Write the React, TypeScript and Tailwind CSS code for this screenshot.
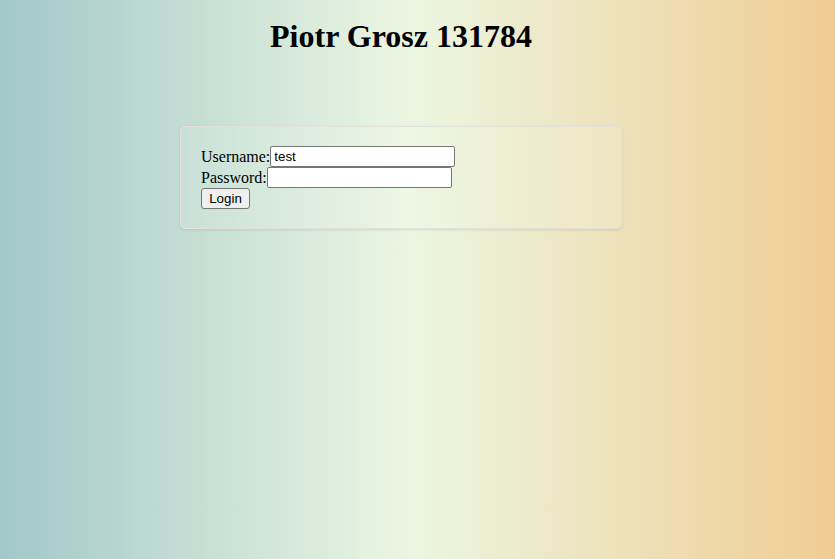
export default function App() {
  return (
    <div className="min-h-[559px] w-full bg-[linear-gradient(90deg,#a2c8c9_0%,#ebf6e1_49%,#f0cc93_100%)] font-['Liberation_Serif',serif] text-black">
      <div className="w-[802px]">
        <h1 className="pt-[18px] text-center text-[32px] leading-[37px] font-bold">
          Piotr Grosz 131784
        </h1>
        <div className="mx-auto mt-[71px] w-[442px] rounded-[5px] border border-[#e2e2da] bg-white/10 px-[20px] py-[19px] shadow-[0_1px_3px_rgba(0,0,0,0.1)]">
          <div className="flex h-[21px] items-center text-[16px] leading-[18px]">
            <label>Username:</label>
            <input
              defaultValue="test"
              className="h-[21px] w-[185px] rounded-[2px] border border-[#767676] bg-white px-[3px] font-['Liberation_Sans',sans-serif] text-[13.33px]"
            />
          </div>
          <div className="flex h-[21px] items-center text-[16px] leading-[18px]">
            <label>Password:</label>
            <input
              type="password"
              className="h-[21px] w-[185px] rounded-[2px] border border-[#767676] bg-white px-[3px] font-['Liberation_Sans',sans-serif] text-[13.33px]"
            />
          </div>
          <div className="flex h-[21px] items-center">
            <button className="h-[21px] w-[49px] rounded-[3px] border border-[#767676] bg-[#efefef] font-['Liberation_Sans',sans-serif] text-[13.33px]">
              Login
            </button>
          </div>
        </div>
      </div>
    </div>
  );
}
